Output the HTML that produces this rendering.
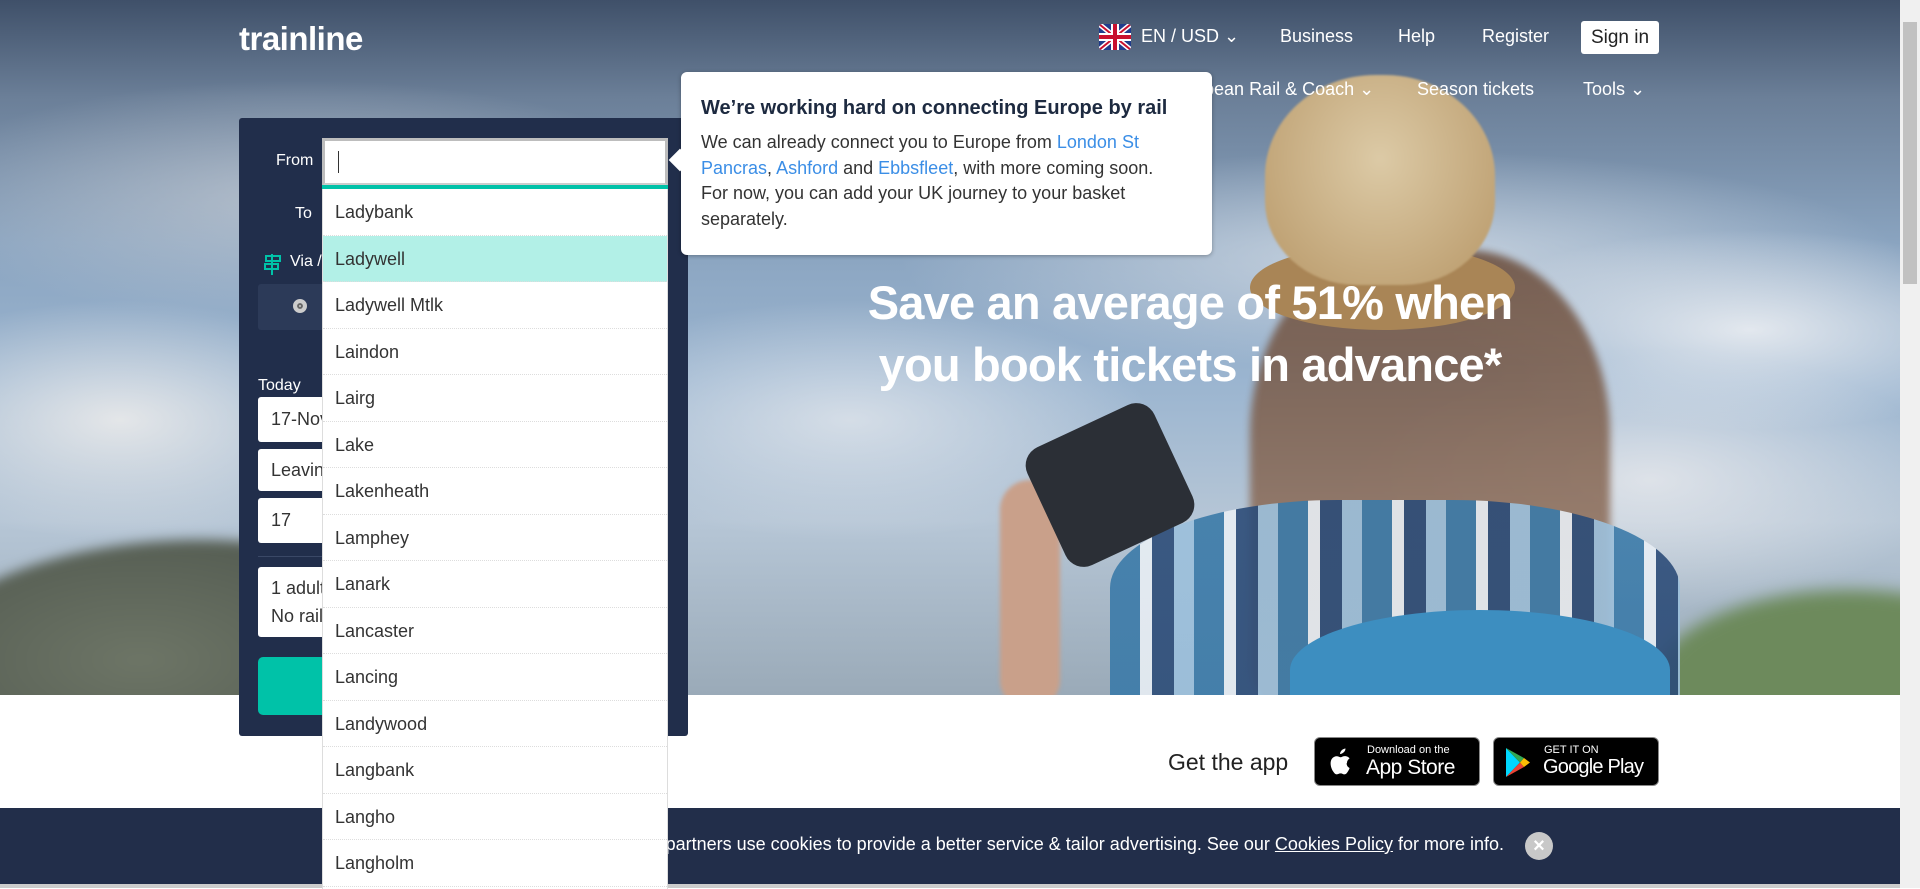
<!DOCTYPE html>
<html><head><meta charset="utf-8"><style>
*{box-sizing:border-box;margin:0;padding:0}
body{width:1920px;height:888px;overflow:hidden;font-family:"Liberation Sans",sans-serif;background:#fff;position:relative}
.hero{position:absolute;left:0;top:0;width:1900px;height:695px;overflow:hidden;
background:
radial-gradient(ellipse 260px 120px at 120px 420px,rgba(235,235,235,.9),transparent),
radial-gradient(ellipse 300px 100px at 1750px 330px,rgba(235,238,242,.9),transparent),
radial-gradient(ellipse 300px 130px at 1650px 480px,rgba(230,232,236,.85),transparent),
radial-gradient(ellipse 300px 120px at 850px 420px,rgba(225,230,236,.8),transparent),
radial-gradient(ellipse 400px 120px at 300px 200px,rgba(200,205,212,.7),transparent),
radial-gradient(ellipse 500px 110px at 1400px 260px,rgba(215,222,230,.8),transparent),
linear-gradient(180deg,#3f5069 0%,#6b7f98 14%,#8aa4c0 35%,#9bb5d0 55%,#b6c6d6 75%,#9aaab8 100%)}
.hill1{position:absolute;left:-100px;top:540px;width:600px;height:300px;border-radius:50%;background:radial-gradient(ellipse at 40% 40%,#6d7566,#3e4640);filter:blur(6px)}
.hill2{position:absolute;left:1650px;top:590px;width:400px;height:200px;border-radius:50%;background:#6d8a5c;filter:blur(8px)}
.hair{position:absolute;left:1250px;top:250px;width:360px;height:460px;border-radius:40% 40% 10% 10%;background:linear-gradient(180deg,#6a4c3a,#8c6c58 60%,#9a7e6a);filter:blur(4px);opacity:.85}
.hat{position:absolute;left:1265px;top:75px;width:230px;height:210px;border-radius:48% 48% 40% 40%;background:radial-gradient(ellipse at 50% 40%,#dccaa6,#b89868);filter:blur(1px)}
.brim{position:absolute;left:1250px;top:245px;width:265px;height:85px;border-radius:50%;background:#a98556}
.shirt{position:absolute;left:1110px;top:500px;width:570px;height:220px;border-radius:40% 40% 0 0;background:repeating-linear-gradient(90deg,#3b7aa8 0 30px,#e8eef4 30px 42px,#2c4c78 42px 64px,#9cc0dc 64px 84px);opacity:.9}
.pack{position:absolute;left:1290px;top:610px;width:380px;height:120px;border-radius:50% 50% 0 0;background:#3d8ec0}
.cam{position:absolute;left:1040px;top:420px;width:140px;height:130px;background:#2b2f36;border-radius:20px;transform:rotate(-25deg)}
.arm{position:absolute;left:1000px;top:480px;width:60px;height:230px;background:#c9a08a;border-radius:30px;filter:blur(2px)}
.logo{position:absolute;left:239px;top:20px;color:#fff;font-weight:bold;font-size:33px;letter-spacing:-0.5px}
.nav{position:absolute;color:#fff;font-size:18px;top:26px}
.nav2{position:absolute;color:#fff;font-size:18px;top:79px}
.signin{position:absolute;left:1581px;top:21px;width:78px;height:33px;background:#fff;border-radius:3px;color:#222;font-size:19px;text-align:center;line-height:33px}
.flag{position:absolute;left:1099px;top:24px;width:32px;height:26px;border-radius:3px;overflow:hidden;background:#1f3c8c}
.panel{position:absolute;left:239px;top:118px;width:449px;height:618px;background:#212e4b;border-radius:3px}
.lbl{position:absolute;color:#fff;font-size:16px}
.inp{position:absolute;left:258px;width:80px;background:#fff;border-radius:3px;color:#333;font-size:18px;padding-left:13px}
.from{position:absolute;left:322px;top:138px;width:346px;height:48px;background:#fff;border:3px solid #bdbdbd;border-bottom-color:#ccc}
.from i{position:absolute;left:13px;top:10px;width:1px;height:22px;background:#333}
.teal{position:absolute;left:322px;top:185px;width:346px;height:4px;background:#00c2a8}
.dd{position:absolute;left:322px;top:189px;width:346px;height:700px;background:#fff;border-left:1px solid #ddd;border-right:1px solid #ddd;z-index:3}
.dd div{height:46.5px;line-height:46px;padding-left:12px;font-size:18px;color:#333;border-bottom:1px dotted #ddd}
.dd .hl{background:#b2f0e7}
.tip{position:absolute;left:681px;top:72px;width:531px;height:183px;background:#fff;border-radius:6px;box-shadow:0 1px 4px rgba(0,0,0,.3);padding:25px 20px;z-index:4}
.tip:before{content:"";position:absolute;left:-9px;top:80px;width:16px;height:16px;background:#fff;transform:rotate(45deg)}
.tip h3{font-size:20px;color:#1d2a40;margin-bottom:10px}
.tip p{font-size:18px;line-height:25.5px;color:#333;white-space:nowrap}
.tip a{color:#3b8ee6;text-decoration:none}
.head1{position:absolute;left:790px;top:272px;width:800px;text-align:center;color:#fff;font-weight:bold;font-size:47px;line-height:62px;letter-spacing:-0.8px}
.app{position:absolute;top:749px;color:#222;font-size:23px;left:1168px}
.badge{position:absolute;top:737px;height:49px;width:166px;background:#000;border:1px solid #888;border-radius:6px;color:#fff;overflow:hidden}
.cookie{position:absolute;left:0;top:808px;width:1900px;height:76px;background:#222e4a;color:#fff;font-size:18px;z-index:1}
.gray{position:absolute;left:0;top:884px;width:1900px;height:4px;background:#ccc}
.sb{position:absolute;left:1900px;top:0;width:20px;height:888px;background:#f0f0f0}
.sb i{position:absolute;left:3px;top:22px;width:14px;height:262px;background:#c1c1c1}
</style></head><body>
<div class="hero">
<div class="hill1"></div><div class="hill2"></div>
<div class="hair"></div><div class="shirt"></div><div class="pack"></div>
<div class="arm"></div><div class="cam"></div>
<div class="brim"></div><div class="hat"></div>
</div>
<div class="logo">trainline</div>
<div class="flag"><svg width="32" height="26" viewBox="0 0 32 26"><rect width="32" height="26" fill="#1f3c8c"/><path d="M0 0L32 26M32 0L0 26" stroke="#fff" stroke-width="5"/><path d="M0 0L32 26M32 0L0 26" stroke="#c8102e" stroke-width="2"/><path d="M16 0V26M0 13H32" stroke="#fff" stroke-width="8"/><path d="M16 0V26M0 13H32" stroke="#c8102e" stroke-width="4"/></svg></div>
<div class="nav" style="left:1141px">EN / USD ⌄</div>
<div class="nav" style="left:1280px">Business</div>
<div class="nav" style="left:1398px">Help</div>
<div class="nav" style="left:1482px">Register</div>
<div class="signin">Sign in</div>
<div class="nav2" style="left:1166px">European Rail &amp; Coach ⌄</div>
<div class="nav2" style="left:1417px">Season tickets</div>
<div class="nav2" style="left:1583px">Tools ⌄</div>
<div class="head1">Save an average of 51% when<br>you book tickets in advance*</div>
<div class="panel"></div>
<div class="lbl" style="left:276px;top:152px">From</div>
<div class="lbl" style="left:295px;top:205px">To</div>
<svg style="position:absolute;left:263px;top:252px" width="20" height="24" viewBox="0 0 20 24"><path d="M9 2V23M3 4H17V9H3ZM2 12H15V17H2Z" fill="none" stroke="#00c2a8" stroke-width="2"/></svg>
<div class="lbl" style="left:290px;top:253px">Via /</div>
<div style="position:absolute;left:258px;top:284px;width:70px;height:46px;background:#2c3a58;border-radius:3px"></div>
<div style="position:absolute;left:293px;top:299px;width:14px;height:14px;border-radius:50%;background:#ccc;border:4px solid #ccc;box-shadow:inset 0 0 0 2px #666"></div>
<div class="lbl" style="left:258px;top:377px">Today</div>
<div class="inp" style="top:397px;height:45px;line-height:45px">17-Nov</div>
<div class="inp" style="top:449px;height:42px;line-height:42px">Leaving</div>
<div class="inp" style="top:498px;height:45px;line-height:45px">17</div>
<div style="position:absolute;left:258px;top:556px;width:70px;height:1px;background:#3a4866"></div>
<div class="inp" style="top:567px;height:70px;line-height:28px;padding-top:7px">1 adult<br>No rail</div>
<div style="position:absolute;left:258px;top:657px;width:80px;height:58px;background:#00c2a8;border-radius:5px"></div>
<div class="from"><i></i></div>
<div class="teal"></div>
<div class="dd">
<div>Ladybank</div><div class="hl">Ladywell</div><div>Ladywell Mtlk</div><div>Laindon</div><div>Lairg</div><div>Lake</div><div>Lakenheath</div><div>Lamphey</div><div>Lanark</div><div>Lancaster</div><div>Lancing</div><div>Landywood</div><div>Langbank</div><div>Langho</div><div>Langholm</div>
</div>
<div class="tip"><h3>We’re working hard on connecting Europe by rail</h3>
<p>We can already connect you to Europe from <a>London St</a><br><a>Pancras</a>, <a>Ashford</a> and <a>Ebbsfleet</a>, with more coming soon.<br>For now, you can add your UK journey to your basket<br>separately.</p></div>
<div class="app">Get the app</div>
<div class="badge" style="left:1314px"><svg style="position:absolute;left:12px;top:10px" width="24" height="28" viewBox="0 0 24 28"><path d="M17 4c-1 1-2.5 2-4 2 0-1.5.8-3 2-4 1-.8 2.5-1.5 3.5-1.5 0 1.2-.5 2.6-1.5 3.5zM20 15c0-3 2.5-4.5 2.6-4.6-1.4-2-3.6-2.3-4.4-2.3-1.9-.2-3.6 1.1-4.6 1.1-.9 0-2.4-1.1-4-1-2 0-3.9 1.2-5 3-2.1 3.7-.5 9.2 1.5 12.2 1 1.5 2.2 3 3.7 3 1.5-.1 2-1 3.8-1s2.3 1 3.8 1c1.6 0 2.6-1.5 3.6-3 1.1-1.7 1.6-3.3 1.6-3.4 0 0-3-1.2-3-4.6z" fill="#fff"/></svg><div style="position:absolute;left:52px;top:6px;font-size:11px">Download on the</div><div style="position:absolute;left:51px;top:18px;font-size:21px;letter-spacing:-0.5px">App Store</div></div>
<div class="badge" style="left:1493px"><svg style="position:absolute;left:10px;top:9px" width="28" height="31" viewBox="0 0 28 31"><path d="M2 1L16 15.5 2 30Z" fill="#00d7fe"/><path d="M2 1L20 11 16 15.5Z" fill="#32a853"/><path d="M2 30L20 20 16 15.5Z" fill="#ea4335"/><path d="M20 11L26 15.5 20 20 16 15.5Z" fill="#fbbc04"/></svg><div style="position:absolute;left:50px;top:6px;font-size:11px">GET IT ON</div><div style="position:absolute;left:49px;top:18px;font-size:20px;letter-spacing:-0.8px;white-space:nowrap">Google Play</div></div>
<div class="cookie"><div style="position:absolute;right:396px;top:26px;white-space:nowrap">We and our partners use cookies to provide a better service &amp; tailor advertising. See our <u>Cookies Policy</u> for more info.</div>
<div style="position:absolute;left:1525px;top:24px;width:28px;height:28px;border-radius:50%;background:#c8c8c8;color:#fff;font-weight:bold;text-align:center;line-height:28px;font-size:20px">×</div></div>
<div class="gray"></div>
<div class="sb"><i></i></div>
</body></html>
